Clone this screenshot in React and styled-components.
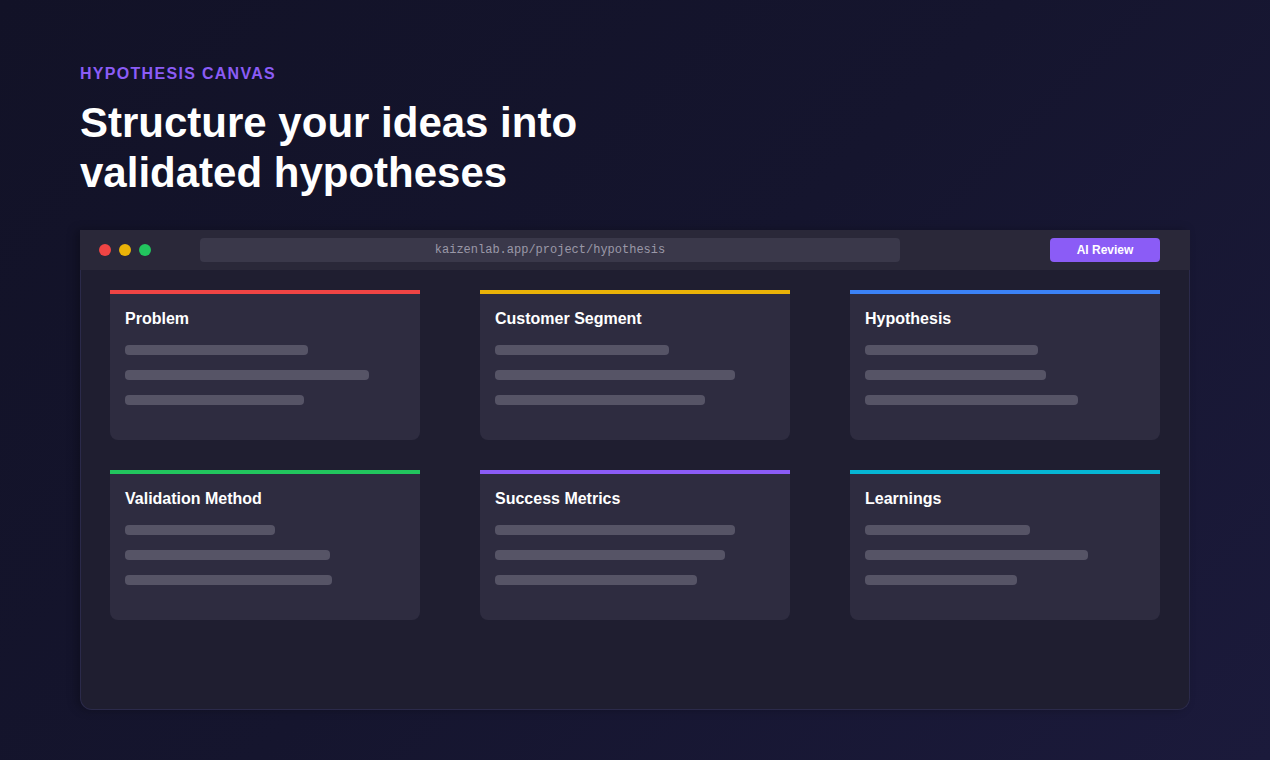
import React from 'react';
import styled, { createGlobalStyle } from 'styled-components';

const GlobalStyle = createGlobalStyle`
  html, body {
    margin: 0;
    padding: 0;
  }
  body {
    font-family: "Liberation Sans", Arial, sans-serif;
    background: #14142a;
  }
`;

const Page = styled.div`
  width: 1270px;
  height: 760px;
  box-sizing: border-box;
  padding: 64px 80px 0;
  background: linear-gradient(135deg, #121227 0%, #15152e 50%, #1b1a3b 100%);
  overflow: hidden;
`;

const Eyebrow = styled.div`
  color: #8b5cf6;
  font-size: 16px;
  line-height: 20px;
  font-weight: 700;
  letter-spacing: 1.3px;
`;

const Title = styled.h1`
  margin: 14px 0 0;
  color: #ffffff;
  font-size: 42px;
  line-height: 50px;
  font-weight: 700;
`;

const Window = styled.div`
  margin-top: 32px;
  width: 1110px;
  height: 480px;
  box-sizing: border-box;
  background: #1f1e30;
  border: 1px solid #2b2a4a;
  border-top: none;
  border-radius: 0 0 12px 12px;
  box-shadow: -4px 0 10px rgba(0, 0, 0, 0.25);
`;

const Toolbar = styled.div`
  height: 40px;
  background: #2a2839;
  display: flex;
  align-items: center;
  padding: 0 30px 0 19px;
  margin: 0 -1px;
`;

const Dots = styled.div`
  display: flex;
  gap: 8px;
  width: 101px;
`;

const Dot = styled.span`
  width: 12px;
  height: 12px;
  border-radius: 50%;
  background: ${p => p.$color};
`;

const Url = styled.div`
  width: 700px;
  height: 24px;
  border-radius: 4px;
  background: #3a384a;
  color: #9a98a8;
  font-family: "Liberation Mono", "DejaVu Sans Mono", monospace;
  font-size: 12px;
  line-height: 24px;
  text-align: center;
`;

const ReviewButton = styled.button`
  margin-left: auto;
  width: 110px;
  height: 24px;
  border: none;
  border-radius: 4px;
  background: #8b5cf6;
  color: #ffffff;
  font-family: "Liberation Sans", Arial, sans-serif;
  font-size: 12px;
  font-weight: 700;
  padding: 0;
`;

const Grid = styled.div`
  display: grid;
  grid-template-columns: repeat(3, 310px);
  column-gap: 60px;
  row-gap: 30px;
  padding: 20px 29px 0;
`;

const Card = styled.div`
  height: 150px;
  box-sizing: border-box;
  background: #2e2c40;
  border-top: 4px solid ${p => p.$accent};
  border-radius: 0 0 8px 8px;
  padding: 15px 15px 0;
`;

const CardTitle = styled.div`
  color: #ffffff;
  font-size: 16px;
  line-height: 20px;
  font-weight: 700;
  margin-bottom: 16px;
`;

const Lines = styled.div`
  display: flex;
  flex-direction: column;
  gap: 15px;
`;

const Line = styled.div`
  height: 10px;
  border-radius: 4px;
  background: #565466;
`;

const cards = [
  { title: 'Problem', accent: '#ef4444', lines: [183, 244, 179] },
  { title: 'Customer Segment', accent: '#eab308', lines: [174, 240, 210] },
  { title: 'Hypothesis', accent: '#3b82f6', lines: [173, 181, 213] },
  { title: 'Validation Method', accent: '#22c55e', lines: [150, 205, 207] },
  { title: 'Success Metrics', accent: '#8b5cf6', lines: [240, 230, 202] },
  { title: 'Learnings', accent: '#06b6d4', lines: [165, 223, 152] },
];

export default function App() {
  return (
    <Page>
      <GlobalStyle />
      <Eyebrow>HYPOTHESIS CANVAS</Eyebrow>
      <Title>
        Structure your ideas into
        <br />
        validated hypotheses
      </Title>
      <Window>
        <Toolbar>
          <Dots>
            <Dot $color="#ef4444" />
            <Dot $color="#eab308" />
            <Dot $color="#22c55e" />
          </Dots>
          <Url>kaizenlab.app/project/hypothesis</Url>
          <ReviewButton>AI Review</ReviewButton>
        </Toolbar>
        <Grid>
          {cards.map(card => (
            <Card key={card.title} $accent={card.accent}>
              <CardTitle>{card.title}</CardTitle>
              <Lines>
                {card.lines.map((w, i) => (
                  <Line key={i} style={{ width: w }} />
                ))}
              </Lines>
            </Card>
          ))}
        </Grid>
      </Window>
    </Page>
  );
}
